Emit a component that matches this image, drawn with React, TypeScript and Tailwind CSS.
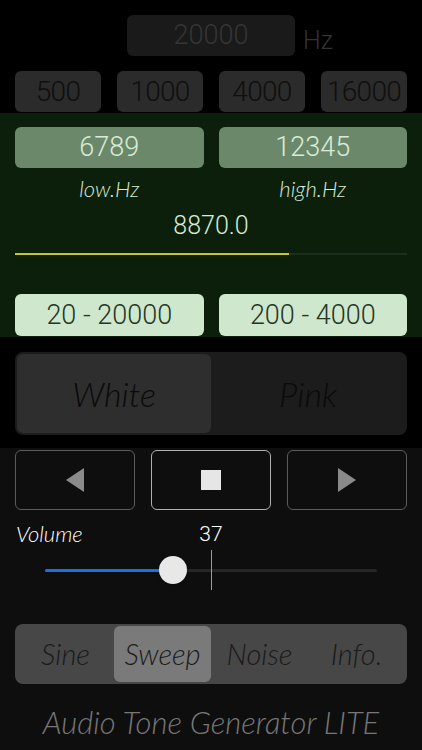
import React, { useState } from "react";

const num = { fontFamily: "Roboto, 'Liberation Sans', sans-serif" };
const ital = { fontFamily: "Lato, 'Noto Sans', sans-serif" };

const presets = ["500", "1000", "4000", "16000"];
const tabs = ["Sine", "Sweep", "Noise", "Info."];

const App = () => {
  const [noise, setNoise] = useState("White");
  const [tab, setTab] = useState("Sweep");
  const volume = 37;
  const sweep = 0.7;

  return (
    <div className="w-[422px] h-[750px] overflow-hidden bg-black flex flex-col select-none">
      {/* frequency input */}
      <div className="h-[113px] pt-[15px] flex flex-col">
        <div className="flex items-end pl-[127px]">
          <div
            className="w-[168px] h-[41px] rounded-md bg-[#1a1a1a] flex items-center justify-center text-[27px] font-light text-[#353535]"
            style={num}
          >
            20000
          </div>
          <span className="ml-[8px] mb-[-3px] text-[25px] font-light text-[#333]" style={num}>
            Hz
          </span>
        </div>
        <div className="mt-[15px] px-[15px] grid grid-cols-4 gap-[16px]">
          {presets.map((p) => (
            <button
              key={p}
              className="h-[41px] rounded-md bg-[#2b2b2b] text-[28px] font-light text-[#0f0f0f] flex items-center justify-center tracking-tight"
              style={num}
            >
              {p}
            </button>
          ))}
        </div>
      </div>

      {/* sweep panel */}
      <div className="h-[224px] bg-[#0b1f0b] pt-[14px] px-[15px] flex flex-col">
        <div className="grid grid-cols-2 gap-[15px]">
          <div
            className="h-[41px] rounded-md bg-[#6c886b] flex items-center justify-center text-[27px] font-light text-[#d8ecd5]"
            style={num}
          >
            6789
          </div>
          <div
            className="h-[41px] rounded-md bg-[#6c886b] flex items-center justify-center text-[27px] font-light text-[#d8ecd5]"
            style={num}
          >
            12345
          </div>
        </div>
        <div className="grid grid-cols-2 gap-[15px] mt-[7px] h-[28px]">
          <div className="text-center italic text-[22px] font-light text-[#d8ecd5] leading-[28px]" style={ital}>
            low.Hz
          </div>
          <div className="text-center italic text-[22px] font-light text-[#d8ecd5] leading-[28px]" style={ital}>
            high.Hz
          </div>
        </div>
        <div className="mt-[8px] text-center text-[25px] font-light text-[#d8ecd5] leading-[30px]" style={num}>
          8870.0
        </div>
        <div className="mt-[12px] h-[2px] bg-[#1e2e1e] flex">
          <div className="h-[2px] bg-[#c9c332]" style={{ width: `${sweep * 100}%` }} />
        </div>
        <div className="mt-[39px] grid grid-cols-2 gap-[15px]">
          <button
            className="h-[42px] rounded-md bg-[#cfe8cd] flex items-center justify-center text-[27px] font-light text-[#253525]"
            style={num}
          >
            20 - 20000
          </button>
          <button
            className="h-[42px] rounded-md bg-[#cfe8cd] flex items-center justify-center text-[27px] font-light text-[#253525]"
            style={num}
          >
            200 - 4000
          </button>
        </div>
      </div>

      {/* noise type */}
      <div className="h-[111px] pt-[15px] px-[15px]">
        <div className="h-[83px] rounded-lg bg-[#1c1c1c] p-[2px] grid grid-cols-2">
          {["White", "Pink"].map((n) => (
            <button
              key={n}
              onClick={() => setNoise(n)}
              className={
                noise === n
                  ? "rounded-md bg-[#2e2e2e] italic font-light text-[34px] text-[#0a0a0a] flex items-center justify-center"
                  : "rounded-md italic font-light text-[34px] text-[#0a0a0a] flex items-center justify-center"
              }
              style={ital}
            >
              {n}
            </button>
          ))}
        </div>
      </div>

      {/* player */}
      <div className="flex-1 bg-[#0e0e0e] px-[15px] pt-[2px] flex flex-col">
        <div className="grid grid-cols-3 gap-[16px]">
          <button className="h-[60px] rounded-md border border-[#5c5c5c] flex items-center justify-center">
            <svg width="18" height="24" viewBox="0 0 18 24">
              <polygon points="18,0 18,24 0,12" fill="#8a8a8a" />
            </svg>
          </button>
          <button className="h-[60px] rounded-md border border-[#b0b0b0] flex items-center justify-center">
            <div className="w-[20px] h-[20px] bg-[#e6e6e6]" />
          </button>
          <button className="h-[60px] rounded-md border border-[#5c5c5c] flex items-center justify-center">
            <svg width="18" height="24" viewBox="0 0 18 24">
              <polygon points="0,0 0,24 18,12" fill="#8a8a8a" />
            </svg>
          </button>
        </div>

        <div className="relative mt-[12px] h-[24px]">
          <span className="absolute left-[1px] top-0 italic font-light text-[22px] text-white leading-[24px]" style={ital}>
            Volume
          </span>
          <span
            className="absolute left-[180px] w-[32px] text-center top-0 text-[21px] font-light text-white leading-[24px]"
            style={num}
          >
            {volume}
          </span>
        </div>

        <div className="relative h-[50px] mx-[30px]">
          <div className="absolute left-0 right-0 top-[23px] h-[3px] rounded-full bg-[#262626]" />
          <div className="absolute left-0 w-[128px] top-[23px] h-[3px] rounded-full bg-[#1a72e0]" />
          <div className="absolute left-[166px] top-[4px] w-[1px] h-[40px] bg-[#9a9a9a]" />
          <div className="absolute left-[114px] top-[10px] w-[28px] h-[28px] rounded-full bg-[#e8e8e8] shadow" />
        </div>

        <div className="mt-[28px] h-[60px] rounded-lg bg-[#474747] p-[2px] grid grid-cols-4">
          {tabs.map((t) => (
            <button
              key={t}
              onClick={() => setTab(t)}
              className={
                tab === t
                  ? "rounded-md bg-[#7a7a7a] italic font-light text-[29px] text-[#1a1a1a] flex items-center justify-center"
                  : "rounded-md italic font-light text-[29px] text-[#1a1a1a] flex items-center justify-center"
              }
              style={ital}
            >
              {t}
            </button>
          ))}
        </div>

        <div className="mt-[20px] text-center italic font-light text-[31px] text-[#777] leading-[36px]" style={ital}>
          Audio Tone Generator LITE
        </div>
      </div>
    </div>
  );
};

export default App;
